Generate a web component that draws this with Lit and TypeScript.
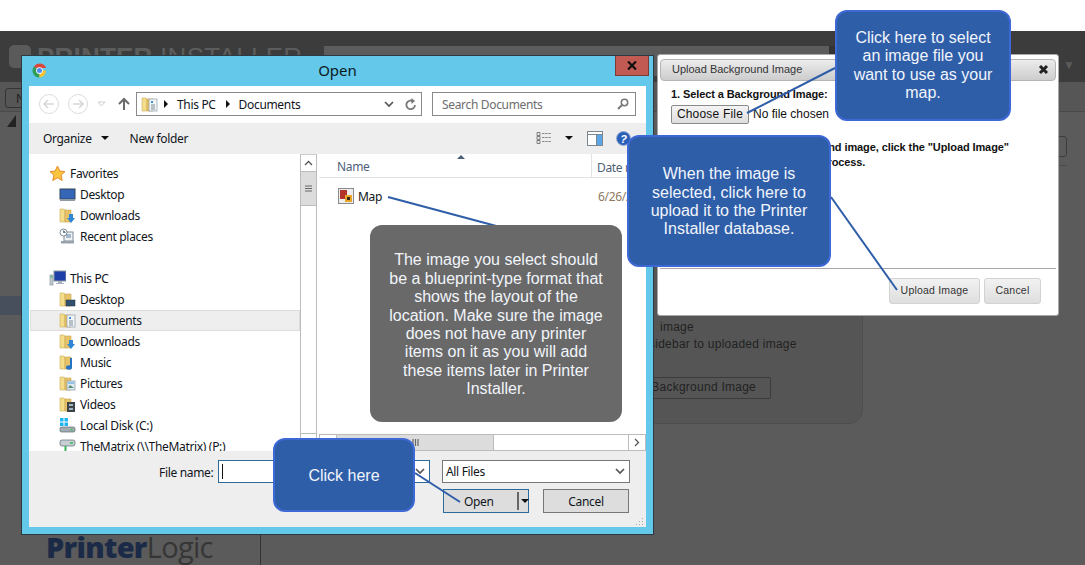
import { LitElement, html, svg, css } from 'lit';
import { customElement } from 'lit/decorators.js';

const folder = (overlay: unknown = '') => html`<svg class="ico" width="17" height="17" viewBox="0 0 17 17">
  <path d="M1 2h4l1 1v12H1z" fill="#f3dc8c" stroke="#cfae5a" stroke-width=".6"/>
  <path d="M6 3h6v12H6z" fill="#e6c368" stroke="#c9a552" stroke-width=".6"/>
  ${overlay}
</svg>`;

const downloadMark = svg`<path d="M10 7h4v4h2l-4 5-4-5h2z" fill="#2f86d6"/>`;
const screenMark = svg`<rect x="7" y="9" width="9" height="6" fill="#31506f" stroke="#1d3148" stroke-width=".5"/>`;
const docMark = svg`<rect x="8" y="3" width="8" height="12" fill="#f2f5f8" stroke="#8e9aa6" stroke-width=".7"/><path d="M10 5h2v2h-2z" fill="#3f91dc"/><path d="M10 9h4M10 11h4M10 13h4" stroke="#7f8b97"/>`;
const musicMark = svg`<path d="M12 4v9" stroke="#2273c4" stroke-width="2"/><ellipse cx="10" cy="13.5" rx="3" ry="2.2" fill="#2273c4"/>`;
const picMark = svg`<rect x="8" y="6" width="8" height="9" fill="#dfe9f0" stroke="#8895a0" stroke-width=".7"/><path d="M9 13l2-3 4 3z" fill="#5c8c78"/><rect x="9" y="7" width="6" height="2" fill="#8ec3ea"/>`;
const videoMark = svg`<rect x="8" y="6" width="8" height="10" fill="#3d4347"/><path d="M10 8h4v2h-4zM10 12h4v2h-4z" fill="#9fb6c4"/>`;

const chevron = html`<svg class="ico" width="10" height="7" viewBox="0 0 10 7"><path d="M1 1l4 4 4-4" fill="none" stroke="#555" stroke-width="1.7"/></svg>`;

@customElement('app-root')
export class AppRoot extends LitElement {
  static styles = css`
    :host {
      display: block;
      position: relative;
      width: 1085px;
      height: 565px;
      overflow: hidden;
      background: #fff;
      font-family: "Liberation Sans", Arial, sans-serif;
    }
    .ico { display: block; flex: none; }

    /* dimmed page behind the dialogs */
    .page { display: flex; flex-direction: column; height: 565px; padding-top: 31px; box-sizing: border-box; }
    .header { height: 51px; flex: none; background: #3c3c3c; display: flex; align-items: flex-start; padding: 14px 10px 0 9px; box-sizing: border-box; color: #5c5c5c; }
    .brand-mark { width: 22px; height: 23px; border-radius: 5px; background: #5a5a5a; flex: none; margin-right: 6px; }
    .brand { font-size: 26px; line-height: 24px; white-space: nowrap; width: 287px; flex: none; letter-spacing: .3px; }
    .brand b { letter-spacing: .2px; }
    .search { width: 505px; height: 30px; margin-top: 1px; background: #5c5c5c; flex: none; }
    .search-btn { width: 30px; height: 30px; margin-top: 1px; background: #333; flex: none; }
    .user { margin-left: auto; margin-top: 13px; font-size: 12px; color: #5a5a5a; }
    .sub { height: 30px; flex: none; background: #565656; border-bottom: 1px solid #4a4a4a; box-sizing: border-box; padding: 6px 0 0 5px; }
    .sub-btn { width: 40px; height: 20px; border: 1px solid #343434; border-radius: 3px; box-sizing: border-box; font-size: 13px; color: #222; padding: 2px 0 0 10px; }
    .main { flex: 1; display: flex; background: #5b5b5b; min-height: 0; }
    .side { width: 261px; flex: none; border-right: 1px solid #333; box-sizing: border-box; display: flex; flex-direction: column; }
    .tri { margin: 3px 0 0 7px; width: 0; height: 0; border-left: 9px solid transparent; border-bottom: 12px solid #222; }
    .hl { height: 19px; margin-top: 169px; background: #474e5c; }
    .pl { margin-top: auto; padding-left: 46px; font-family: "Open Sans", sans-serif; font-size: 29px; line-height: 32px; color: #363636; letter-spacing: -.7px; white-space: nowrap; margin-bottom: 2px; }
    .pl b { color: #1b2b47; font-weight: 800; }
    .content { flex: 1; display: flex; align-items: flex-start; }
    .panel { margin: 28px 0 0 339px; width: 263px; height: 284px; box-sizing: border-box; background: #555; border: 1px solid #4e4e4e; border-radius: 14px; display: flex; flex-direction: column; justify-content: flex-end; padding: 0 0 24px 50px; font-size: 12px; line-height: 17px; color: #222; letter-spacing: .25px; }
    .panel .l1 { padding-left: 9px; }
    .panel .l2 { margin-left: -2px; }
    .panel-btn { margin: 24px 0 0 -80px; width: 200px; height: 22px; flex: none; box-sizing: border-box; border: 1px solid #3c3c3c; border-radius: 2px; text-align: right; padding: 1px 14px 0 0; white-space: nowrap; }
    .right { margin: 24px 0 0 177px; width: 27px; flex: none; }
    .right-box { height: 21px; border: 1px solid #3c3c3c; border-radius: 3px; box-sizing: border-box; }
    .right-line { margin-top: 8px; height: 1px; background: #4a4a4a; }

    /* Open dialog */
    .open { position: absolute; left: 21px; top: 55px; width: 633px; height: 480px; box-sizing: border-box; background: #63c8ea; border: 1px solid #2d3a42; display: flex; flex-direction: column; padding: 0 7px 7px; font-family: "Noto Sans", "Open Sans", sans-serif; font-size: 12px; letter-spacing: -.33px; color: #10151c; }
    .title { height: 30px; flex: none; display: flex; align-items: center; justify-content: center; position: relative; font-size: 15px; letter-spacing: 0; color: #0b1a22; padding-bottom: 2px; box-sizing: border-box; }
    .chrome { position: absolute; left: 3px; top: 7px; }
    .close { position: absolute; right: -3px; top: 0; width: 34px; height: 20px; box-sizing: border-box; background: #c15a52; border: 1px solid #7d3a35; border-top: 0; display: flex; align-items: center; justify-content: center; }
    .client { flex: 1; min-height: 0; background: #fff; display: flex; flex-direction: column; }
    .navbar { height: 37px; flex: none; display: flex; align-items: center; padding: 0 0 1px 10px; box-sizing: border-box; }
    .navbtn { width: 20px; height: 20px; border: 1px solid #dcdcdc; border-radius: 50%; box-sizing: border-box; margin-right: 9px; display: flex; align-items: center; justify-content: center; flex: none; }
    .up { margin-left: 11px; }
    .crumb { width: 286px; height: 24px; margin-left: 5px; box-sizing: border-box; border: 1px solid #8a8a8a; display: flex; align-items: center; padding: 0 4px; white-space: nowrap; }
    .crumb .grow { margin-left: auto; display: flex; align-items: center; gap: 11px; }
    .crumb .part { margin-right: 4px; }
    .tri-r { width: 0; height: 0; margin: 0 9px 0 6px; border-left: 4px solid #111; border-top: 4px solid transparent; border-bottom: 4px solid transparent; }
    .srch { width: 204px; height: 24px; margin-left: 10px; box-sizing: border-box; border: 1px solid #8a8a8a; display: flex; align-items: center; justify-content: space-between; padding: 0 6px 0 9px; color: #6d6d6d; }
    .cmd { height: 31px; flex: none; background: #eee; display: flex; align-items: center; padding: 0 15px 1px 14px; box-sizing: border-box; }
    .caret { width: 0; height: 0; border-top: 4px solid #111; border-left: 4px solid transparent; border-right: 4px solid transparent; flex: none; }
    .cmd > .caret { margin: 0 21px 0 9px; }
    .cmd-tools { margin-left: auto; display: flex; align-items: center; }
    .cmd-tools .caret { margin: 0 14px 0 13px; }
    .cmd-tools .help { margin-left: 13px; }
    .body { flex: 1; min-height: 0; display: flex; }
    .tree { width: 271px; flex: none; overflow: hidden; padding-top: 9px; box-sizing: border-box; }
    .row { height: 21px; display: flex; align-items: center; gap: 4px; padding-left: 20px; box-sizing: border-box; white-space: nowrap; }
    .row.child { padding-left: 30px; }
    .row.gap { margin-top: 21px; }
    .row.sel { background: #eee; border: 1px solid #ddd; margin-left: 1px; padding-left: 28px; }
    .vscroll { width: 17px; flex: none; border: 1px solid #bcbcbc; border-top-color: #ccc; box-sizing: border-box; display: flex; flex-direction: column; }
    .sb-btn { height: 16px; flex: none; display: flex; align-items: center; justify-content: center; background: #fff; }
    .sb-thumb { height: 33px; flex: none; background: #dcdcdc; border-top: 1px solid #bcbcbc; border-bottom: 1px solid #bcbcbc; display: flex; align-items: center; justify-content: center; }
    .vspace { flex: 1; }
    .sb-end { border-top: 1px solid #bcbcbc; }
    .files { flex: 1; min-width: 0; margin-left: 2px; display: flex; flex-direction: column; }
    .cols { height: 24px; flex: none; border-bottom: 1px solid #e3e3e3; box-sizing: border-box; display: flex; position: relative; color: #4f617a; align-items: center; }
    .col-name { width: 273px; height: 100%; box-sizing: border-box; padding: 4px 0 0 18px; border-right: 1px solid #e3e3e3; flex: none; }
    .col-date { padding: 3px 0 0 5px; white-space: nowrap; }
    .sort { position: absolute; left: 138px; top: 1px; width: 0; height: 0; border-bottom: 4px solid #4c5f78; border-left: 4px solid transparent; border-right: 4px solid transparent; }
    .list { flex: 1; min-height: 0; }
    .file { display: flex; align-items: center; height: 20px; margin-top: 8px; padding-left: 19px; gap: 4px; }
    .file .name { width: 236px; flex: none; }
    .file .date { color: #8e7a62; white-space: nowrap; }
    .hscroll { height: 17px; flex: none; border: 1px solid #bcbcbc; box-sizing: border-box; display: flex; }
    .hb { width: 16px; flex: none; display: flex; align-items: center; justify-content: center; }
    .hb.end { margin-left: auto; border-left: 1px solid #bcbcbc; }
    .ht { width: 158px; flex: none; background: #dcdcdc; border-left: 1px solid #bcbcbc; border-right: 1px solid #bcbcbc; box-sizing: border-box; display: flex; align-items: center; justify-content: center; }
    .foot { height: 76px; flex: none; background: #eee; position: relative; box-sizing: border-box; padding-top: 9px; }
    .foot-row { display: flex; align-items: center; margin-left: 130px; white-space: nowrap; }
    .foot-row label { width: 54px; margin-right: 5px; flex: none; padding-top: 1px; }
    .input { width: 212px; height: 23px; box-sizing: border-box; background: #fff; border: 1px solid #2b6a9b; display: flex; align-items: center; justify-content: space-between; padding: 0 4px 0 3px; flex: none; }
    .cursor { width: 1px; height: 15px; background: #111; }
    .select { margin-left: 12px; width: 188px; height: 23px; box-sizing: border-box; background: #fff; border: 1px solid #777; display: flex; align-items: center; justify-content: space-between; padding: 0 4px 0 3px; flex: none; }
    .btns { display: flex; margin: 6px 0 0 414px; gap: 14px; }
    .wbtn { width: 86px; height: 24px; box-sizing: border-box; background: #ddd; border: 1px solid #777; display: flex; align-items: center; justify-content: center; }
    .wbtn.primary { border-color: #2b6a9b; justify-content: flex-start; padding-left: 20px; }
    .wbtn .split { width: 2px; height: 18px; background: #666; margin-left: 23px; margin-right: 2px; flex: none; }
    .grip { position: absolute; right: 2px; bottom: 1px; }

    /* Upload dialog */
    .upload { position: absolute; left: 657px; top: 54px; width: 402px; height: 262px; box-sizing: border-box; background: #fff; border: 1px solid #a8a8a8; border-radius: 3px; padding: 4px 2px 0; display: flex; flex-direction: column; color: #111; }
    .up-title { height: 22px; flex: none; box-sizing: border-box; border: 1px solid #b4b4b4; border-radius: 4px; background: linear-gradient(#ececec, #cdcdcd); display: flex; align-items: center; justify-content: space-between; padding: 0 6px 2px 11px; font-size: 11px; color: #333; }
    .up-body { padding: 6px 0 0 11px; font-size: 11px; font-weight: 700; line-height: 15px; letter-spacing: -.1px; flex: 1; }
    .chooser { display: flex; align-items: center; margin-top: 3px; font-weight: 400; font-size: 12px; letter-spacing: 0; }
    .choose { width: 78px; height: 19px; box-sizing: border-box; border: 1px solid #8a8a8a; border-radius: 2px; background: linear-gradient(#f4f4f4, #dedede); display: flex; align-items: center; justify-content: center; margin-right: 4px; letter-spacing: .2px; }
    .hint { margin-top: 16px; white-space: nowrap; }
    .up-foot { height: 47px; flex: none; border-top: 1px solid #a8a8a8; display: flex; justify-content: flex-end; gap: 4px; padding: 9px 15px 0 0; box-sizing: border-box; }
    .up-btn { height: 26px; box-sizing: border-box; border: 1px solid #d2d2d2; border-radius: 3px; background: linear-gradient(#f2f2f2, #dedede); font-size: 10.5px; letter-spacing: .2px; color: #333; display: flex; align-items: center; justify-content: center; padding-bottom: 2px; }
    .up-btn.a { width: 91px; }
    .up-btn.b { width: 57px; }

    /* callouts */
    .call { position: absolute; box-sizing: border-box; display: flex; align-items: center; justify-content: center; text-align: center; color: #f1f5fb; font-size: 16px; line-height: 18.4px; background: #2f5ea9; border: 2px solid #3e68d4; border-radius: 12px; }
    .call.a { left: 835px; top: 10px; width: 176px; height: 111px; }
    .call.b { left: 627px; top: 135px; width: 204px; height: 132px; padding-top: 2px; }
    .call.c { left: 370px; top: 225px; width: 252px; height: 197px; background: #696969; border: 0; padding-top: 3px; }
    .call.d { left: 273px; top: 438px; width: 142px; height: 74px; padding-top: 2px; }
    .leaders { position: absolute; inset: 0; pointer-events: none; }
  `;

  private treeRow(icon: unknown, label: string, cls = 'child') {
    return html`<div class="row ${cls}">${icon}<span>${label}</span></div>`;
  }

  render() {
    return html`
      <div class="page">
        <div class="header">
          <div class="brand-mark"></div>
          <div class="brand"><b>PRINTER</b> INSTALLER</div>
          <div class="search"></div>
          <div class="search-btn"></div>
          <div class="user">g ▼</div>
        </div>
        <div class="sub"><div class="sub-btn">N</div></div>
        <div class="main">
          <div class="side">
            <div class="tri"></div>
            <div class="hl"></div>
            <div class="pl"><b>Printer</b>Logic</div>
          </div>
          <div class="content">
            <div class="panel">
              <div class="l1">image</div>
              <div class="l2">sidebar to uploaded image</div>
              <div class="panel-btn">Upload Background Image</div>
            </div>
            <div class="right">
              <div class="right-box"></div>
              <div class="right-line"></div>
            </div>
          </div>
        </div>
      </div>

      <div class="upload">
        <div class="up-title">
          <span>Upload Background Image</span>
          <svg class="ico" width="11" height="11" viewBox="0 0 11 11"><path d="M2 2l7 7M9 2l-7 7" stroke="#222" stroke-width="3"/></svg>
        </div>
        <div class="up-body">
          <div>1. Select a Background Image:</div>
          <div class="chooser"><div class="choose">Choose File</div>No file chosen</div>
          <div class="hint">2. After selecting the background image, click the "Upload Image"<br />button to confirm the upload process.</div>
        </div>
        <div class="up-foot">
          <div class="up-btn a">Upload Image</div>
          <div class="up-btn b">Cancel</div>
        </div>
      </div>

      <div class="open">
        <div class="title">
          <svg class="chrome" width="15" height="15" viewBox="0 0 16 16">
            <path d="M8 8L2 3.6A7.5 7.5 0 0 1 15 5.2H8z" fill="#d9483b"/>
            <path d="M8 8h7a7.5 7.5 0 0 1-7.4 7.5z" fill="#f2c230"/>
            <path d="M8 8l-.4 7.5A7.5 7.5 0 0 1 2 3.6z" fill="#2f9e58"/>
            <circle cx="8" cy="8" r="3.6" fill="#fff"/>
            <circle cx="8" cy="8" r="2.7" fill="#4c8bf0"/>
          </svg>
          Open
          <div class="close"><svg class="ico" width="10" height="9" viewBox="0 0 10 9"><path d="M1 .5l8 8M9 .5l-8 8" stroke="#111" stroke-width="2.2"/></svg></div>
        </div>
        <div class="client">
          <div class="navbar">
            <div class="navbtn"><svg class="ico" width="12" height="10" viewBox="0 0 12 10"><path d="M5 1L1 5l4 4M1 5h10" fill="none" stroke="#d8d8d8" stroke-width="1.6"/></svg></div>
            <div class="navbtn"><svg class="ico" width="12" height="10" viewBox="0 0 12 10"><path d="M7 1l4 4-4 4M11 5H1" fill="none" stroke="#d8d8d8" stroke-width="1.6"/></svg></div>
            <svg class="ico" width="9" height="6" viewBox="0 0 9 6"><path d="M1 1h7L4.500 5z" fill="none" stroke="#cfcfcf"/></svg>
            <svg class="ico up" width="14" height="14" viewBox="0 0 14 14"><path d="M7 13V2M2 7l5-5 5 5" fill="none" stroke="#6a6a6a" stroke-width="2"/></svg>
            <div class="crumb">
              ${folder(docMark)}
              <div class="tri-r"></div><span class="part">This PC</span>
              <div class="tri-r"></div><span>Documents</span>
              <div class="grow">
                ${chevron}
                <svg class="ico" width="12" height="13" viewBox="0 0 12 13"><path d="M10 7a4.300 4.300 0 1 1-2-3.800" fill="none" stroke="#777" stroke-width="1.800"/><path d="M6.500 0v6l3.500-3z" fill="#777"/></svg>
              </div>
            </div>
            <div class="srch">
              <span>Search Documents</span>
              <svg class="ico" width="12" height="12" viewBox="0 0 12 12"><circle cx="7.500" cy="4.500" r="3.200" fill="none" stroke="#777" stroke-width="1.500"/><path d="M5 7l-4 4" stroke="#777" stroke-width="2"/></svg>
            </div>
          </div>
          <div class="cmd">
            <span>Organize</span><div class="caret"></div><span>New folder</span>
            <div class="cmd-tools">
              <svg class="ico" width="16" height="14" viewBox="0 0 16 14"><path d="M1 1.500h3v3H1zM1 5.500h3v3H1zM1 9.500h3v3H1z" fill="none" stroke="#7c7c7c"/><path d="M6 2.500h9M6 6.500h9M6 10.500h9" stroke="#8a8a8a" stroke-dasharray="2.500 .7"/></svg>
              <div class="caret"></div>
              <svg class="ico" width="16" height="15" viewBox="0 0 16 15"><rect x=".5" y=".5" width="15" height="14" fill="#fff" stroke="#7d8790"/><path d="M.5 3.500h15" stroke="#7d8790"/><rect x="10" y="4" width="5" height="10" fill="#5aa6e6"/><path d="M9.500 3.500v11" stroke="#7d8790"/></svg>
              <svg class="ico help" width="15" height="15" viewBox="0 0 15 15"><circle cx="7.500" cy="7.500" r="7" fill="#2a5fb8" stroke="#9ab0cf"/><text x="7.500" y="11.500" text-anchor="middle" font-size="11" font-weight="700" font-style="italic" fill="#fff" font-family="Liberation Sans">?</text></svg>
            </div>
          </div>
          <div class="body">
            <div class="tree">
              ${this.treeRow(html`<svg class="ico" width="17" height="17" viewBox="0 0 17 17"><path d="M8.500 1l2.300 5 5.200.6-3.900 3.500 1.100 5.400-4.700-2.700-4.700 2.700 1.100-5.400L1 6.600 6.200 6z" fill="#fbc53d" stroke="#e88a2d"/></svg>`, 'Favorites', 'top')}
              ${this.treeRow(html`<svg class="ico" width="17" height="17" viewBox="0 0 17 17"><rect x="1" y="3" width="15" height="10" fill="#3566b8" stroke="#31455e"/><rect x="1" y="13" width="15" height="2" fill="#8e9aa6"/></svg>`, 'Desktop')}
              ${this.treeRow(folder(downloadMark), 'Downloads')}
              ${this.treeRow(html`<svg class="ico" width="17" height="17" viewBox="0 0 17 17"><rect x="5" y="4" width="9" height="9" fill="#eef2f5" stroke="#7f8b97"/><circle cx="4.500" cy="4.500" r="3.500" fill="#fff" stroke="#7f8b97"/><path d="M4.500 2.500v2h2M7 7h5M7 9h5" stroke="#5f7fa0"/><rect x="2" y="13" width="13" height="2.500" fill="#9aa3ab"/></svg>`, 'Recent places')}
              ${this.treeRow(html`<svg class="ico" width="17" height="17" viewBox="0 0 17 17"><rect x="5" y="1" width="12" height="10" fill="#1f3fa8" stroke="#8a96a2"/><path d="M9 11h4v2h2v1H7v-1h2z" fill="#a9b2ba"/><rect x="1" y="5" width="3" height="10" fill="#c2c9cf" stroke="#7f8b97" stroke-width=".6"/><rect x="1.600" y="6" width="1.800" height="1.500" fill="#44c26a"/></svg>`, 'This PC', 'top gap')}
              ${this.treeRow(folder(screenMark), 'Desktop')}
              ${this.treeRow(folder(docMark), 'Documents', 'child sel')}
              ${this.treeRow(folder(downloadMark), 'Downloads')}
              ${this.treeRow(folder(musicMark), 'Music')}
              ${this.treeRow(folder(picMark), 'Pictures')}
              ${this.treeRow(folder(videoMark), 'Videos')}
              ${this.treeRow(html`<svg class="ico" width="17" height="17" viewBox="0 0 17 17"><path d="M1 1h3.500v3.500H1zM5.500 1H9v3.500H5.500zM1 5.500h3.500V9H1zM5.500 5.500H9V9H5.500z" fill="#1eb4f0"/><rect x="1" y="10" width="15" height="5" rx="1.500" fill="#a3acb3" stroke="#5f6a73" stroke-width=".7"/><rect x="11" y="12" width="3" height="1.500" fill="#55c46e"/></svg>`, 'Local Disk (C:)')}
              ${this.treeRow(html`<svg class="ico" width="17" height="17" viewBox="0 0 17 17"><rect x="1" y="2" width="15" height="6" rx="2" fill="#c8cfd4" stroke="#5f6a73" stroke-width=".7"/><rect x="11" y="4" width="3" height="2" fill="#55c46e"/><path d="M6.500 8v5" stroke="#38b35a" stroke-width="2"/></svg>`, 'TheMatrix (\\\\TheMatrix) (P:)')}
            </div>
            <div class="vscroll">
              <div class="sb-btn"><svg class="ico" width="9" height="6" viewBox="0 0 9 6"><path d="M1 5l3.500-3.500L8 5" fill="none" stroke="#555" stroke-width="1.300"/></svg></div>
              <div class="sb-thumb"><svg class="ico" width="7" height="7" viewBox="0 0 7 7"><path d="M0 1h7M0 3.500h7M0 6h7" stroke="#666" stroke-width="1.200"/></svg></div>
              <div class="vspace"></div>
              <div class="sb-btn sb-end"></div>
            </div>
            <div class="files">
              <div class="cols">
                <div class="col-name">Name</div>
                <div class="col-date">Date modified</div>
                <div class="sort"></div>
              </div>
              <div class="list">
                <div class="file">
                  <svg class="ico" width="16" height="16" viewBox="0 0 16 16"><rect x=".5" y=".5" width="15" height="15" fill="#eee" stroke="#8a8a8a"/><rect x="2" y="2" width="7" height="9" fill="#b3322a"/><rect x="7" y="7" width="7" height="7" fill="#e8a52c"/><rect x="9" y="9" width="3" height="3" fill="#3a2a1a"/></svg>
                  <span class="name">Map</span>
                  <span class="date">6/26/2017</span>
                </div>
              </div>
              <div class="hscroll">
                <div class="hb"></div>
                <div class="ht"><svg class="ico" width="7" height="7" viewBox="0 0 7 7"><path d="M1 0v7M3.500 0v7M6 0v7" stroke="#666" stroke-width="1.200"/></svg></div>
                <div class="hb end"><svg class="ico" width="6" height="9" viewBox="0 0 6 9"><path d="M1 1l3.500 3.500L1 8" fill="none" stroke="#555" stroke-width="1.300"/></svg></div>
              </div>
            </div>
          </div>
          <div class="foot">
            <div class="foot-row">
              <label>File name:</label>
              <div class="input"><div class="cursor"></div>${chevron}</div>
              <div class="select"><span>All Files</span>${chevron}</div>
            </div>
            <div class="btns">
              <div class="wbtn primary"><span>Open</span><div class="split"></div><div class="caret"></div></div>
              <div class="wbtn">Cancel</div>
            </div>
            <svg class="grip" width="9" height="9" viewBox="0 0 9 9"><path d="M7 1h1v1H7zM4 4h1v1H4zM7 4h1v1H7zM1 7h1v1H1zM4 7h1v1H4zM7 7h1v1H7z" fill="#a8a8a8"/></svg>
          </div>
        </div>
      </div>

      <svg class="leaders" width="1085" height="565" viewBox="0 0 1085 565">
        <g fill="none" stroke="#2f5ea9" stroke-width="2">
          <path d="M388 197L500 227"/>
          <path d="M835 68L747 113"/>
          <path d="M831 197L897 290"/>
          <path d="M415 473L460 502"/>
        </g>
      </svg>

      <div class="call a">Click here to select<br />an image file you<br />want to use as your<br />map.</div>
      <div class="call b">When the image is<br />selected, click here to<br />upload it to the Printer<br />Installer database.</div>
      <div class="call c">The image you select should<br />be a blueprint-type format that<br />shows the layout of the<br />location. Make sure the image<br />does not have any printer<br />items on it as you will add<br />these items later in Printer<br />Installer.</div>
      <div class="call d">Click here</div>
    `;
  }
}
